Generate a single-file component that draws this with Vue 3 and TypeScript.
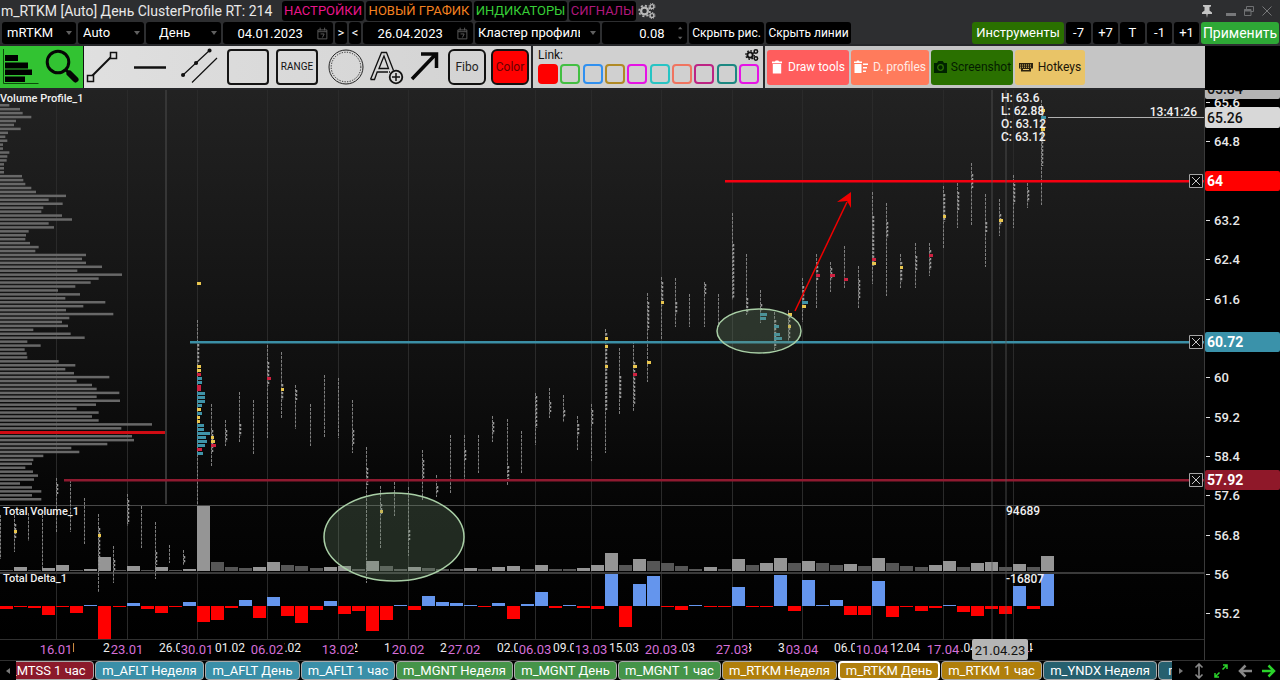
<script setup lang="ts">
import { ref } from 'vue'

type Mark = [y: number, width: number, color: 'y' | 'r' | 'b']
interface Day {
  top: number
  bottom: number
  dense?: [number, number]
  marks?: Mark[]
}

const STEP = 14.07
const ROW = 3.94
const TOP = 90
const priceY = (p: number): number => Math.floor(181 + (64 - p) * 49.2 - TOP)
const dayX = (i: number): number => Math.round(i * STEP)

const ticker = ref('mRTKM')
const mode = ref('Auto')
const period = ref('День')
const from = ref('04.01.2023')
const to = ref('26.04.2023')
const kind = ref('Кластер профиль')
const step = ref('0.08')

const menus = [
  { text: 'НАСТРОЙКИ', tone: 'pink', w: 82 },
  { text: 'НОВЫЙ ГРАФИК', tone: 'orange', w: 106 },
  { text: 'ИНДИКАТОРЫ', tone: 'lime', w: 93 },
  { text: 'СИГНАЛЫ', tone: 'plum', w: 67 },
]
const shifts = ['-7', '+7', 'T', '-1', '+1']
const links = ['red', 'green', 'blue', 'gold', 'magenta', 'cyan', 'coral', 'rose', 'teal', 'fuchsia']

const profile: number[] = [
  28, 60, 68, 94, 48, 42, 62, 24, 16, 22, 9, 9, 28, 22, 20, 12, 12, 12, 66, 70, 76, 94, 108, 198, 146, 188, 130, 124,
  186, 216, 146, 162, 86, 78, 76, 90, 116, 106, 258, 246, 258, 306, 232, 366, 296, 272, 226, 174, 240, 196, 316, 250,
  198, 340, 208, 186, 204, 100, 212, 254, 82, 122, 74, 80, 82, 176, 226, 196, 222, 328, 230, 276, 290, 358, 290, 360,
  288, 230, 296, 276, 296, 456, 364, 498, 396, 402, 322, 214, 238, 130, 100, 96, 76, 99, 114, 102, 60, 96, 124, 96, 124,
]
const peak = Math.max(...profile)

const volume: number[] = [
  1, 4, 1, 3, 6, 1, 2, 14, 1, 5, 1, 4, 1, 2, 65, 9, 4, 3, 4, 9, 6, 5, 3, 4, 5, 2, 10, 5, 2, 4, 3, 2, 2, 3, 2, 4, 5, 2, 6,
  2, 2, 3, 6, 18, 6, 12, 10, 8, 5, 2, 4, 2, 12, 6, 8, 13, 8, 10, 8, 6, 7, 5, 13, 8, 5, 4, 6, 10, 4, 8, 9, 4, 7, 4, 15,
]
const delta: number[] = [
  -3, -1, -2, -9, -1, -7, 1, -33, -1, 3, -3, -7, -1, 4, -16, -14, -2, 6, -12, 9, -10, -17, -4, 5, -8, -5, -25, -14, 1,
  -4, 10, 4, 3, 1, -1, 3, -13, 2, 14, -2, 1, -2, -3, 33, -21, 22, 30, -1, -4, 1, -1, -1, 19, -1, -1, 31, -5, 26, 1, 6,
  -9, -9, 25, -11, -1, -5, -2, 1, -6, -10, -3, -8, 20, -3, 33,
]

const days: Day[] = [
  { top: 515, bottom: 559 },
  { top: 515, bottom: 552, dense: [524, 538], marks: [[531, 3, 'y']] },
  { top: 513, bottom: 541 },
  { top: 515, bottom: 568 },
  { top: 478, bottom: 532, dense: [484, 494] },
  { top: 480, bottom: 532 },
  { top: 498, bottom: 544 },
  { top: 514, bottom: 592, dense: [528, 565], marks: [[535, 3, 'y']] },
  { top: 546, bottom: 583, dense: [560, 570] },
  { top: 494, bottom: 526, dense: [500, 524] },
  { top: 506, bottom: 548 },
  { top: 522, bottom: 579, dense: [552, 565] },
  { top: 545, bottom: 563 },
  { top: 550, bottom: 565, dense: [556, 563] },
  {
    top: 320, bottom: 505, dense: [344, 364],
    marks: [
      [283, 4, 'y'], [366, 4, 'y'], [370, 4, 'y'], [374, 4, 'r'], [378, 5, 'b'], [382, 5, 'b'], [386, 4, 'r'],
      [389, 4, 'r'], [393, 8, 'b'], [397, 8, 'b'], [401, 8, 'b'], [405, 5, 'b'], [409, 4, 'y'], [413, 5, 'b'],
      [417, 3, 'y'], [421, 3, 'y'], [425, 7, 'b'], [429, 7, 'b'], [433, 13, 'b'], [437, 9, 'b'], [441, 10, 'b'],
      [445, 8, 'b'], [449, 5, 'r'], [453, 6, 'b'],
    ],
  },
  { top: 404, bottom: 466, dense: [430, 452], marks: [[437, 3, 'y'], [441, 4, 'y'], [445, 5, 'r']] },
  { top: 420, bottom: 446, dense: [430, 442] },
  { top: 392, bottom: 442, dense: [424, 436] },
  { top: 400, bottom: 454 },
  { top: 345, bottom: 438, dense: [362, 386], marks: [[378, 4, 'r']] },
  { top: 352, bottom: 418, dense: [384, 400], marks: [[389, 3, 'y']] },
  { top: 385, bottom: 429, dense: [390, 400] },
  { top: 404, bottom: 446 },
  { top: 375, bottom: 438 },
  { top: 378, bottom: 438 },
  { top: 400, bottom: 453, dense: [430, 444] },
  { top: 447, bottom: 583, dense: [468, 485] },
  { top: 486, bottom: 548, dense: [504, 514], marks: [[511, 3, 'y']] },
  { top: 482, bottom: 516 },
  { top: 487, bottom: 556, dense: [530, 540] },
  { top: 450, bottom: 500, dense: [460, 478] },
  { top: 475, bottom: 497, dense: [486, 494] },
  { top: 435, bottom: 493 },
  { top: 435, bottom: 481, dense: [450, 460] },
  { top: 435, bottom: 473 },
  { top: 416, bottom: 442, dense: [422, 434] },
  { top: 419, bottom: 485, dense: [466, 480] },
  { top: 431, bottom: 473 },
  { top: 393, bottom: 445, dense: [396, 428] },
  { top: 388, bottom: 418, dense: [402, 412] },
  { top: 395, bottom: 422, dense: [410, 418] },
  { top: 416, bottom: 450, dense: [424, 436] },
  { top: 404, bottom: 461, dense: [410, 424] },
  { top: 329, bottom: 453, dense: [333, 410], marks: [[338, 3, 'y'], [346, 3, 'y'], [366, 3, 'y']] },
  { top: 348, bottom: 414, dense: [376, 398] },
  { top: 341, bottom: 411, dense: [362, 404], marks: [[366, 4, 'y'], [374, 4, 'r']] },
  { top: 293, bottom: 382, dense: [302, 330], marks: [[362, 4, 'y']] },
  { top: 277, bottom: 340, dense: [282, 306], marks: [[302, 3, 'y']] },
  { top: 278, bottom: 327, dense: [302, 314] },
  { top: 294, bottom: 327 },
  { top: 282, bottom: 327, dense: [284, 294] },
  { top: 294, bottom: 327 },
  { top: 213, bottom: 300, dense: [244, 298] },
  { top: 254, bottom: 315, dense: [298, 314] },
  { top: 290, bottom: 323, dense: [304, 312], marks: [[314, 7, 'b'], [318, 6, 'b']] },
  { top: 312, bottom: 350, dense: [320, 348], marks: [[326, 5, 'b'], [334, 6, 'b'], [338, 8, 'b']] },
  { top: 310, bottom: 341, dense: [316, 338], marks: [[314, 4, 'y'], [326, 3, 'y']] },
  { top: 278, bottom: 322, dense: [286, 310], marks: [[302, 6, 'b'], [306, 4, 'y']] },
  { top: 254, bottom: 308, dense: [262, 280], marks: [[275, 4, 'r']] },
  { top: 262, bottom: 292, dense: [268, 280], marks: [[275, 5, 'r']] },
  { top: 246, bottom: 288, marks: [[279, 4, 'r']] },
  { top: 266, bottom: 308, dense: [280, 298] },
  { top: 192, bottom: 284, dense: [216, 266], marks: [[259, 4, 'r'], [263, 4, 'y']] },
  { top: 203, bottom: 296, dense: [222, 238] },
  { top: 254, bottom: 288, dense: [262, 282], marks: [[267, 3, 'y']] },
  { top: 243, bottom: 288, dense: [256, 270] },
  { top: 243, bottom: 276, dense: [250, 270], marks: [[255, 4, 'r']] },
  { top: 186, bottom: 248, dense: [194, 222], marks: [[216, 3, 'y']] },
  { top: 183, bottom: 228, dense: [192, 210] },
  { top: 163, bottom: 225, dense: [174, 188] },
  { top: 194, bottom: 267, dense: [222, 232] },
  { top: 199, bottom: 236, dense: [214, 226], marks: [[220, 4, 'y']] },
  { top: 175, bottom: 228, dense: [180, 204] },
  { top: 183, bottom: 208, dense: [190, 202] },
  { top: 100, bottom: 205, dense: [106, 166], marks: [[110, 4, 'y'], [117, 5, 'b'], [129, 4, 'y']] },
]
const palette = { y: '#e9c64f', r: '#cf2140', b: '#3f93a8' }

const grid = [4, 9, 14, 19, 24, 29, 33, 38, 42, 47, 52, 57, 62, 67, 72]
const weekly: [number, string][] = [
  [4, '16.01'], [9, '23.01'], [14, '30.01'], [19, '06.02'], [24, '13.02'], [29, '20.02'], [33, '27.02'],
  [38, '06.03'], [42, '13.03'], [47, '20.03'], [52, '27.03'], [57, '03.04'], [62, '10.04'], [67, '17.04'], [72, '24.04'],
]
const daily: [number, string][] = [
  [4, '16.01'], [8, '20.01'], [12, '26.01'], [16, '01.02'], [20, '07.02'], [24, '13.02'], [28, '17.02'], [32, '24.02'],
  [36, '02.03'], [40, '09.03'], [44, '15.03'], [48, '21.03'], [52, '27.03'], [56, '31.03'], [60, '06.04'],
  [64, '12.04'], [68, '18.04'], [72, '24.04'],
]
const scale = ['65.6', '64.8', '63.2', '62.4', '61.6', '60', '59.2', '58.4', '57.6', '56.8', '56', '55.2']
const levels = [
  { price: 64, label: '64', x: 725, color: '#f50010', tag: '#ff0000' },
  { price: 60.72, label: '60.72', x: 190, color: '#3b8fa6', tag: '#3a92aa' },
  { price: 57.92, label: '57.92', x: 64, color: '#8f1a30', tag: '#8f1829' },
]
const ohlc = ['H: 63.6', 'L: 62.88', 'O: 63.12', 'C: 63.12']

const tabs = [
  { text: 'm_MTSS 1 час', tone: 'wine', w: 98 },
  { text: 'm_AFLT Неделя', tone: 'aqua', w: 109 },
  { text: 'm_AFLT День', tone: 'aqua', w: 95 },
  { text: 'm_AFLT 1 час', tone: 'aqua', w: 94 },
  { text: 'm_MGNT Неделя', tone: 'leaf', w: 117 },
  { text: 'm_MGNT День', tone: 'leaf', w: 103 },
  { text: 'm_MGNT 1 час', tone: 'leaf', w: 103 },
  { text: 'm_RTKM Неделя', tone: 'ochre', w: 115 },
  { text: 'm_RTKM День', tone: 'ochre active', w: 102 },
  { text: 'm_RTKM 1 час', tone: 'ochre', w: 101 },
  { text: 'm_YNDX Неделя', tone: 'sea', w: 114 },
  { text: 'm_YNDX День', tone: 'sea', w: 106 },
]
</script>

<template>
  <div class="app">
    <header class="title-row">
      <h1>m_RTKM [Auto] День ClusterProfile RT: 214</h1>
      <button v-for="m in menus" :key="m.text" class="menu" :class="m.tone" :style="{ width: m.w + 'px' }">{{ m.text }}</button>
      <button class="bare" aria-label="Параметры">
        <svg width="18" height="18" viewBox="0 0 18 18" fill="none" stroke="#b9b9b9">
          <circle cx="6.5" cy="9" r="3.4" stroke-width="2.2" />
          <circle cx="6.5" cy="9" r="5.4" stroke-width="1.6" stroke-dasharray="2.1 2.1" />
          <circle cx="14" cy="4.5" r="1.9" stroke-width="1.4" />
          <circle cx="14" cy="4.5" r="3" stroke-width="1" stroke-dasharray="1.3 1" />
          <circle cx="14" cy="13.5" r="1.9" stroke-width="1.4" />
          <circle cx="14" cy="13.5" r="3" stroke-width="1" stroke-dasharray="1.3 1" />
        </svg>
      </button>
      <span class="grow"></span>
      <div class="window-buttons">
        <button class="bare" aria-label="Закрепить">
          <svg width="12" height="14" viewBox="0 0 12 14"><path d="M2 1h8v1.500l-1.500 .5v3.500l2.500 2v1.500h-4.300l-.7 4-.7-4h-4.300v-1.500l2.500-2v-3.500l-1.500-.5z" fill="#c4c4c4" /></svg>
        </button>
        <button class="bare" aria-label="Свернуть"><svg width="12" height="12" viewBox="0 0 12 12"><path d="M1 8h10v3h-10z" fill="#77787a" /></svg></button>
        <button class="bare" aria-label="Развернуть"><svg width="12" height="12" viewBox="0 0 12 12" fill="none" stroke="#6f7072"><path d="M3.500 4v-2.500h7v5h-2.500" /><path d="M1.500 4.500h6.500v6h-6.500z" /><path d="M1 5.500h7" stroke-width="2" /></svg></button>
        <button class="bare" aria-label="Закрыть"><svg width="12" height="12" viewBox="0 0 12 12"><path d="M1.500 1.500l9 9m0-9l-9 9" stroke="#77787a" /></svg></button>
      </div>
    </header>

    <div class="form-row">
      <label class="field ticker"><select v-model="ticker" aria-label="Инструмент"><option>mRTKM</option></select></label>
      <label class="field mode"><select v-model="mode" aria-label="Режим"><option>Auto</option></select></label>
      <label class="field period"><select v-model="period" aria-label="Период"><option>День</option></select></label>
      <label class="field date">
        <input v-model="from" type="text" aria-label="Дата начала" />
        <svg width="12" height="13" viewBox="0 0 12 13" fill="none" stroke="#606060"><path d="M1 2.500h10v10h-10zM1 4.500h10M3.500 0v3M8.500 0v3M4 7h4l-2 4" /></svg>
      </label>
      <button class="black nav">&gt;</button>
      <button class="black nav">&lt;</button>
      <label class="field date">
        <input v-model="to" type="text" aria-label="Дата конца" />
        <svg width="12" height="13" viewBox="0 0 12 13" fill="none" stroke="#606060"><path d="M1 2.500h10v10h-10zM1 4.500h10M3.500 0v3M8.500 0v3M4 7h4l-2 4" /></svg>
      </label>
      <label class="field kind"><select v-model="kind" aria-label="Тип графика"><option>Кластер профиль</option></select></label>
      <label class="field step">
        <input v-model="step" type="text" aria-label="Шаг цены" />
        <svg width="7" height="14" viewBox="0 0 7 14" fill="#606060"><path d="M3.500 0l2.500 3h-5zM3.500 14l2.500-3h-5z" /></svg>
      </label>
      <button class="black small hide-draw">Скрыть рис.</button>
      <button class="black small hide-lines">Скрыть линии</button>
      <span class="grow"></span>
      <button class="black instruments">Инструменты</button>
      <button v-for="s in shifts" :key="s" class="black shift">{{ s }}</button>
      <button class="black apply">Применить</button>
    </div>

    <div class="tool-row">
      <div class="tools">
        <div class="lime-group">
          <button class="bare" aria-label="Профиль">
            <svg width="38" height="38" viewBox="0 0 38 38"><path d="M1.500 1v34.500h35" fill="none" stroke="#0b4d0b" /><path d="M3 7h13v6h-13zM3 14.500h23v6h-23zM3 21.500h27v5.500h-27zM3 28.500h20v5.500h-20z" /></svg>
          </button>
          <button class="bare" aria-label="Лупа">
            <svg width="38" height="38" viewBox="0 0 38 38" fill="none" stroke="#050505"><circle cx="14" cy="14" r="10.800" stroke-width="3" /><path d="M22 22l3 3" stroke-width="3" /><path d="M25.500 25.500l6 6" stroke-width="6" stroke-linecap="round" /></svg>
          </button>
        </div>
        <div class="draw-group">
          <button class="bare first" aria-label="Отрезок">
            <svg width="38" height="38" viewBox="0 0 38 38" fill="none" stroke="#111"><path d="M8 28l19-19" stroke-width="2" /><path d="M3.500 27.500h6v6h-6zM26.500 4.500h6v6h-6z" fill="#ddd" stroke-width="1.500" /></svg>
          </button>
          <button class="bare cell" aria-label="Горизонталь">
            <svg width="38" height="38" viewBox="0 0 38 38"><path d="M3 19.500h32" stroke="#111" stroke-width="2.500" /></svg>
          </button>
          <button class="bare cell" aria-label="Канал">
            <svg width="38" height="38" viewBox="0 0 38 38" fill="none" stroke="#111" stroke-width="1.200"><path d="M3 27l27-25M12 34.500l25-24.500" /><path d="M3 27h.1M16 15h.1M29.500 2.500h.1" stroke-width="4" stroke-linecap="round" /></svg>
          </button>
          <button class="bare cell" aria-label="Прямоугольник"><span class="box"></span></button>
          <button class="bare cell"><span class="box range">RANGE</span></button>
          <button class="bare cell" aria-label="Эллипс">
            <svg width="38" height="38" viewBox="0 0 38 38" fill="none" stroke="#222"><circle cx="19" cy="19" r="17" /><circle cx="19" cy="19" r="14.800" stroke-dasharray="1.200 1.400" /></svg>
          </button>
        </div>
        <button class="bare letter" aria-label="Текст">
          <svg width="38" height="38" viewBox="0 0 38 38" fill="none" stroke="#111" stroke-width="1.300"><path d="M2.500 31.500l11-27h5l7 18M2.500 31.500h4l2.700-7.500h10.800M16 8l-5 12.500h9.500zM22 24l-1 0" /><circle cx="28" cy="29" r="6.300" stroke-width="1.800" /><path d="M28 25v8M24 29h8" stroke-width="1.500" /></svg>
        </button>
        <button class="bare arrow" aria-label="Стрелка">
          <svg width="34" height="38" viewBox="0 0 34 38"><path d="M4 31l23-24M13 6h15.500v14" fill="none" stroke="#080808" stroke-width="3.500" /></svg>
        </button>
        <button class="square fibo">Fibo</button>
        <button class="square color">Color</button>
      </div>

      <div class="link-panel">
        <div class="link-head">
          <span>Link:</span>
          <button class="bare" aria-label="Настройки связи">
            <svg width="14" height="14" viewBox="0 0 18 18" fill="none" stroke="#111">
              <circle cx="6.500" cy="9" r="3.400" stroke-width="2.500" />
              <circle cx="6.500" cy="9" r="5.400" stroke-width="1.800" stroke-dasharray="2.100 2.100" />
              <circle cx="14" cy="4.500" r="2.200" stroke-width="2" />
              <circle cx="14" cy="13.500" r="2.200" stroke-width="2" />
            </svg>
          </button>
        </div>
        <div class="swatches">
          <button v-for="c in links" :key="c" class="swatch" :class="c" :aria-label="c"></button>
        </div>
      </div>

      <div class="actions">
        <button class="action draw">
          <svg width="12" height="14" viewBox="0 0 12 14" fill="#fff"><path d="M1 1.500h3l.7-1h2.600l.7 1h3v1.700h-10zM1.800 4h8.400v9.500h-8.400z" /></svg>Draw tools
        </button>
        <button class="action prof">
          <svg width="14" height="14" viewBox="0 0 14 14" fill="#fff"><path d="M0 1.500h2.500l.5-1h2l.5 1h2.500v1.500h-8zM.5 4h7v9h-7zM9 3.500h5v1.500h-5zM9 7h4v1.500h-4zM9 10.500h3v1.500h-3z" /></svg>D. profiles
        </button>
        <button class="action shot">
          <svg width="15" height="14" viewBox="0 0 15 14"><path d="M1 3h3l1.300-2h4.400l1.300 2h3v10h-13z" fill="#020" /><circle cx="7.500" cy="7.500" r="2.800" fill="none" stroke="#2a7000" stroke-width="1.300" /></svg>Screenshot
        </button>
        <button class="action keys">
          <svg width="14" height="9" viewBox="0 0 14 9"><path d="M0 0h14v5.500h-2v3h-10v-3h-2z" fill="#2c2410" /><path d="M1 2h12M1 4.200h12" stroke="#e9c467" stroke-dasharray="1 1" /><path d="M4 6.500h6" stroke="#e9c467" /></svg>Hotkeys
        </button>
      </div>
    </div>

    <main class="work">
      <section class="plot">
        <svg class="canvas" width="100%" height="100%">
          <defs>
            <linearGradient id="sky" x1="0" y1="0" x2="0" y2="1">
              <stop offset="0" stop-color="#222222" />
              <stop offset=".5" stop-color="#101010" />
              <stop offset=".76" stop-color="#050505" />
              <stop offset="1" stop-color="#000000" />
            </linearGradient>
          </defs>
          <rect width="100%" height="549" fill="url(#sky)" />
          <rect v-for="g in grid" :key="g" :x="dayX(g)" y="0" width="1" height="549" fill="#2a2a2a" />
          <rect v-for="(w, i) in profile" :key="'p' + i" x="0" :y="14 + i * ROW" :width="w / 3" :height="w === peak ? 3 : 2.500" :fill="w === peak ? '#d00c14' : '#686868'" />
          <rect x="165" y="0" width="2" height="414" fill="#363636" />

          <g v-for="(v, i) in volume" :key="'v' + i">
            <rect :x="dayX(i)" :y="481 - v" width="13" :height="v" :fill="v > (volume[i - 1] ?? 1) ? '#959595' : '#565656'" />
          </g>
          <g v-for="(d, i) in delta" :key="'d' + i">
            <rect :x="dayX(i)" :y="d > 0 ? 516 - d : 516" width="13" :height="Math.abs(d)" :fill="d > 0 ? '#6495ed' : '#ff0000'" />
          </g>
          <rect x="0" y="415" width="100%" height="1" fill="#484848" />
          <rect x="0" y="482" width="100%" height="2" fill="#3a3a3a" />
          <rect x="0" y="549" width="100%" height="1" fill="#303030" />

          <g v-for="(d, i) in days" :key="'c' + i">
            <line :x1="dayX(i) + 0.5" :x2="dayX(i) + 0.5" :y1="d.top - TOP" :y2="d.bottom - TOP" stroke="#808080" stroke-dasharray="2.900 1.040" />
            <line v-if="d.dense" :x1="dayX(i) + 1.500" :x2="dayX(i) + 1.500" :y1="d.dense[0] - TOP" :y2="d.dense[1] - TOP" stroke="#9a9a9a" stroke-width="1.500" stroke-dasharray="2.400 1.540" />
          </g>

          <rect v-for="l in levels" :key="l.label" :x="l.x" :y="priceY(l.price) - 1" width="100%" height="2.500" :fill="l.color" />
          <g v-for="(d, i) in days" :key="'m' + i">
            <rect v-for="m in d.marks ?? []" :key="m[0]" :x="dayX(i)" :y="m[0] - TOP - 1" :width="m[1]" height="3" :fill="palette[m[2]]" />
          </g>

          <ellipse cx="394" cy="447" rx="70" ry="44" class="zone" stroke-width="1.500" />
          <ellipse cx="759" cy="241" rx="42" ry="22" class="zone" stroke-width="1.500" />
          <path d="M795 221L847 112" stroke="#f00000" stroke-width="1.500" />
          <path d="M851 102L837 112L847 111L851 118Z" fill="#f00000" />

          <rect x="991" y="0" width="2" height="549" fill="#555" opacity=".4" />
          <rect x="1005" y="0" width="2" height="549" fill="#555" opacity=".4" />
          <rect x="1048" y="27" width="100%" height="1" fill="#b0b0b0" />

          <g class="panel-name">
            <text x="0" y="12">Volume Profile_1</text>
            <text x="3" y="425">Total Volume_1</text>
            <text x="3" y="492">Total Delta_1</text>
          </g>
          <g class="note">
            <text x="1006" y="425">94689</text>
            <text x="1006" y="493">-16807</text>
            <text v-for="(t, i) in ohlc" :key="t" x="1001" :y="12 + i * 13">{{ t }}</text>
            <text x="100%" dx="-7" y="26" text-anchor="end">13:41:26</text>
          </g>

          <rect x="0" y="550" width="100%" height="21" fill="#000" />
          <text v-for="[i, t] in daily" :key="'w' + i" class="day" :x="dayX(i) + 5" y="562">{{ t }}</text>
          <g v-for="[i, t] in weekly" :key="'k' + i">
            <rect :x="dayX(i) - 17" y="550" width="34" height="20" fill="#000" />
            <text class="week" :x="dayX(i)" y="564">{{ t }}</text>
          </g>
          <rect x="972" y="549" width="56" height="21" rx="2" fill="#b5b5b5" />
          <text class="cursor" x="1000" y="565">21.04.23</text>
        </svg>
        <button v-for="l in levels" :key="l.label" class="remove" :style="{ top: priceY(l.price) - 7 + 'px' }" :aria-label="'Удалить ' + l.label">
          <svg width="14" height="14" viewBox="0 0 14 14"><path d="M.5 .5h13v13h-13z" fill="#080808" stroke="#a5a5a5" /><path d="M3 3l8 8m0-8l-8 8" stroke="#c5c5c5" /></svg>
        </button>
      </section>

      <aside class="axis">
        <svg width="100%" height="100%">
          <g v-for="s in scale" :key="s">
            <rect x="1" :y="priceY(Number(s))" width="4" height="1" fill="#ddd" />
            <text x="9" :y="priceY(Number(s)) + 5" fill="#e8e8e8">{{ s }}</text>
          </g>
          <rect x="0" y="-10" width="100%" height="19" rx="2" fill="#b4b4b4" />
          <text x="2" y="4" class="tag" fill="#111">65.84</text>
          <rect x="0" y="17" width="100%" height="21" rx="2" fill="#d8d8d8" />
          <text x="2" y="33" class="tag" fill="#111">65.26</text>
          <g v-for="l in levels" :key="l.label">
            <rect x="0" :y="priceY(l.price) - 10" width="100%" height="20" rx="2" :fill="l.tag" />
            <text x="2" :y="priceY(l.price) + 5" class="tag strong" fill="#fff">{{ l.label }}</text>
          </g>
        </svg>
      </aside>
    </main>

    <footer class="tab-row">
      <button class="bare prev" aria-label="Назад"><svg width="6" height="6" viewBox="0 0 6 6"><path d="M5 0v6l-4-3z" fill="#777" /></svg></button>
      <nav class="tabs">
        <button v-for="t in tabs" :key="t.text" class="tab" :class="t.tone" :style="{ width: t.w + 'px' }">{{ t.text }}</button>
      </nav>
      <div class="tab-tools">
        <button class="bare" aria-label="Вперёд"><svg width="6" height="6" viewBox="0 0 6 6"><path d="M1 0v6l4-3z" fill="#777" /></svg></button>
        <button class="bare" aria-label="По высоте"><svg width="10" height="16" viewBox="0 0 10 16" fill="none" stroke="#888" stroke-width="1.600"><path d="M5 1v14M1.500 4.500l3.500-3.500 3.500 3.500M1.500 11.500l3.500 3.500 3.500-3.500" /></svg></button>
        <button class="bare" aria-label="Растянуть"><svg width="14" height="14" viewBox="0 0 14 14" fill="none" stroke="#2bd42b" stroke-width="1.500"><path d="M8.500 5.500l4.500-4.500M9 1h4v4M5.500 8.500l-4.500 4.500M1 9v4h4" /></svg></button>
        <button class="bare" aria-label="Влево"><svg width="14" height="14" viewBox="0 0 14 14" fill="none" stroke="#888" stroke-width="2.500"><path d="M14 7h-12M7.500 1.500l-5.500 5.500 5.500 5.500" /></svg></button>
        <button class="bare" aria-label="Вправо"><svg width="14" height="14" viewBox="0 0 14 14" fill="none" stroke="#2bd42b" stroke-width="2.500"><path d="M0 7h12M6.500 1.500l5.500 5.500-5.500 5.500" /></svg></button>
      </div>
    </footer>
  </div>
</template>

<style>
body {
  background: #000;
}
</style>

<style scoped>
.app {
  display: flex;
  flex-direction: column;
  min-height: 100vh;
  background: #2d2e30;
  color: #fff;
  font: 14px/18px Roboto, "Open Sans", "Liberation Sans", sans-serif;
  overflow: hidden;
}
button,
input,
select {
  font: inherit;
  color: inherit;
  margin: 0;
  padding: 0;
  border: 0;
  box-sizing: border-box;
}
button {
  white-space: nowrap;
  cursor: pointer;
}
.bare {
  display: flex;
  align-items: center;
  justify-content: center;
  background: none;
}
.grow {
  flex: 1;
}
.title-row {
  display: flex;
  align-items: center;
  gap: 2px;
  height: 22px;
}
h1 {
  width: 280px;
  margin: 0;
  padding-left: 1px;
  box-sizing: border-box;
  font-size: 14px;
  font-weight: 400;
  white-space: nowrap;
  color: #e8e8e8;
}
.menu {
  flex: none;
  height: 20px;
  border-radius: 3px;
  background: #000;
  font-size: 13px;
}
.pink { color: #e8168a; }
.orange { color: #f58220; }
.lime { color: #37cf37; }
.plum { color: #b0187c; }
.window-buttons {
  display: flex;
  gap: 6px;
  padding-right: 7px;
}
.window-buttons .bare:first-child {
  margin-right: 6px;
}
.form-row {
  display: flex;
  gap: 2px;
  height: 22px;
  padding: 0 1px 0 2px;
}
.field,
.black {
  display: flex;
  align-items: center;
  height: 22px;
  border-radius: 3px;
  background: #000;
  box-sizing: border-box;
}
.black {
  justify-content: center;
  font-size: 13px;
}
.field {
  position: relative;
  font-size: 13px;
}
.field select,
.field input {
  width: 100%;
  height: 22px;
  background: none;
  outline: 0;
  appearance: none;
}
.field select {
  padding-left: 5px;
}
.field:has(select)::after {
  position: absolute;
  right: 4px;
  top: 9px;
  border: 3px solid transparent;
  border-top: 4px solid #606060;
  border-bottom: 0;
  content: "";
}
.ticker { width: 74px; }
.mode { width: 66px; }
.period { width: 75px; }
.period select { padding-left: 13px; }
.date {
  width: 110px;
  padding-right: 5px;
}
.date input {
  text-align: center;
}
.nav { width: 12px; }
.kind { width: 125px; }
.kind select {
  padding-left: 3px;
  margin-right: 20px;
  overflow: hidden;
  text-overflow: clip;
}
.step {
  width: 85px;
  padding-right: 4px;
}
.step input {
  padding-right: 12px;
  text-align: right;
}
.small { font-size: 12px; }
.hide-draw { width: 75px; }
.hide-lines { width: 85px; }
.instruments {
  width: 92px;
  background: #2a7000;
}
.shift { width: 25px; }
.apply {
  width: 78px;
  background: #2ea836;
  font-size: 14px;
}
.tool-row {
  display: flex;
  height: 46px;
  padding: 2px 0;
  box-sizing: border-box;
  margin-right: 75px;
  background: #26272a;
  box-shadow: 75px 2px 0 #000;
}
.tools {
  display: flex;
  align-items: center;
  flex: none;
  width: 531px;
  background: linear-gradient(90deg, #e2e2e2, #d2d2d2);
}
.lime-group {
  display: flex;
  gap: 4px;
  align-items: center;
  width: 84px;
  height: 100%;
  padding-left: 2px;
  border-right: 1px solid #111;
  background: #32c332;
  box-sizing: border-box;
}
.draw-group {
  display: flex;
  gap: 7px;
  width: 283px;
}
.first { width: 38px; }
.cell { width: 42px; }
.letter { width: 40px; }
.arrow { width: 36px; }
.box {
  display: grid;
  place-items: center;
  width: 42px;
  height: 36px;
  border: 2px solid #151515;
  border-radius: 4px;
  color: #111;
  box-sizing: border-box;
}
.range {
  font-size: 10px;
}
.square {
  width: 38px;
  height: 36px;
  margin-left: 5px;
  border: 2px solid #111;
  border-radius: 6px;
  background: none;
  color: #222;
  font-size: 12px;
}
.square.color {
  background: #ff0000;
  color: #650000;
}
.link-panel {
  flex: none;
  width: 230px;
  margin: 0 2px;
  padding: 0 4px 0 5px;
  background: #d0d0d0;
  color: #111;
  box-sizing: border-box;
}
.link-head {
  display: flex;
  justify-content: space-between;
  height: 18px;
  font-size: 12px;
}
.swatches {
  display: flex;
  justify-content: space-between;
}
.swatch {
  width: 20px;
  height: 20px;
  border: 2px solid;
  border-radius: 4px;
  background: none;
}
.swatch.red { color: #f00; background: #f00; }
.swatch.green { color: #43bf43; }
.swatch.blue { color: #3090f0; }
.swatch.gold { color: #b18a25; }
.swatch.magenta { color: #e613e6; }
.swatch.cyan { color: #28c4c4; }
.swatch.coral { color: #f07460; }
.swatch.rose { color: #bd2484; }
.swatch.teal { color: #1c8882; }
.swatch.fuchsia { color: #e613e6; }
.actions {
  display: flex;
  align-items: center;
  gap: 2px;
  flex: 1;
  padding-left: 2px;
  background: #c5c5c5;
}
.action {
  display: flex;
  align-items: center;
  justify-content: center;
  gap: 5px;
  height: 35px;
  border-radius: 3px;
  font-size: 12px;
}
.draw { width: 82px; background: #ff5d5d; }
.prof { width: 78px; background: #ff7b5c; color: #ffeae4; }
.shot { width: 82px; gap: 3px; background: #2a7000; color: #041c00; }
.keys { width: 70px; background: #e9c467; color: #1c1608; }
.work {
  display: flex;
  flex: 1;
  min-height: 570px;
  background: #000;
}
.plot {
  position: relative;
  flex: 1;
  min-width: 0;
  overflow: hidden;
  border-right: 1px solid #3a3a3a;
}
.canvas,
.axis svg {
  position: absolute;
  inset: 0;
}
.axis {
  position: relative;
  width: 75px;
  overflow: hidden;
  font-size: 13px;
  font-weight: 500;
}
.tag { font-size: 14px; font-weight: 500; }
.strong { font-weight: 700; }
.zone {
  fill: rgba(110, 145, 110, 0.28);
  stroke: #a9cfa6;
}
.note {
  fill: #f0f0f0;
  font-size: 12px;
  font-weight: 500;
}
.panel-name {
  fill: #f0f0f0;
  font-size: 11px;
  font-weight: 500;
}
.day {
  fill: #eee;
  font-size: 12px;
  text-anchor: middle;
}
.week {
  fill: #d56fd8;
  font-size: 13px;
  text-anchor: middle;
}
.cursor {
  fill: #111;
  font-size: 13px;
  text-anchor: middle;
}
.remove {
  position: absolute;
  right: 1px;
  display: block;
  width: 14px;
  height: 14px;
  background: none;
}
.remove svg {
  display: block;
}
.tab-row {
  display: flex;
  height: 20px;
  border-top: 1px solid #303030;
  background: #000;
  box-sizing: border-box;
}
.prev { width: 16px; }
.tabs {
  display: flex;
  justify-content: flex-start;
  gap: 1px;
  flex: 1;
  min-width: 0;
  overflow: hidden;
}
.tab {
  flex: none;
  height: 19px;
  border: 1px solid #a9a9a9;
  border-radius: 4px;
  font-size: 13px;
  line-height: 16px;
}
.tab:first-child {
  margin-left: -20px;
  padding-right: 5px;
}
.wine { background: #8b1a2b; }
.aqua { background: #3a8fa8; }
.leaf { background: #459449; }
.ochre { background: #b07f0c; }
.sea { background: #26606f; }
.active { border: 2px solid #fff; line-height: 14px; }
.tab-tools {
  display: flex;
  align-items: center;
  justify-content: space-between;
  width: 108px;
  padding: 0 4px 0 6px;
  box-sizing: border-box;
}
</style>
